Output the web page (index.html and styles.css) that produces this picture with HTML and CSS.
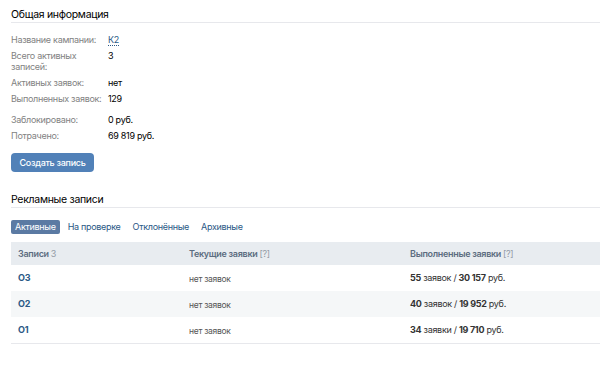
FILE: index.html
```html
<!DOCTYPE html>
<html lang="ru">
<head>
<meta charset="utf-8">
<link rel="stylesheet" href="styles.css">
</head>
<body>
<div class="page">
  <h2 class="heading">Общая информация</h2>
  <div class="info">
    <div class="row"><div class="label">Название кампании:</div><div class="value"><a class="dotted">К2</a></div></div>
    <div class="row"><div class="label">Всего активных записей:</div><div class="value">3</div></div>
    <div class="row"><div class="label">Активных заявок:</div><div class="value">нет</div></div>
    <div class="row"><div class="label">Выполненных заявок:</div><div class="value">129</div></div>
    <div class="row group"><div class="label">Заблокировано:</div><div class="value">0 руб.</div></div>
    <div class="row"><div class="label">Потрачено:</div><div class="value">69 819 руб.</div></div>
  </div>
  <button class="btn">Создать запись</button>
  <h2 class="heading heading2">Рекламные записи</h2>
  <div class="tabs">
    <span class="tab active">Активные</span>
    <span class="tab">На проверке</span>
    <span class="tab">Отклонённые</span>
    <span class="tab">Архивные</span>
  </div>
  <div class="table">
    <div class="tr th">
      <div class="c1">Записи <span class="cnt">3</span></div>
      <div class="c2">Текущие заявки <span class="q">[?]</span></div>
      <div class="c3">Выполненные заявки <span class="q">[?]</span></div>
    </div>
    <div class="tr">
      <div class="c1 name">О3</div>
      <div class="c2 none">нет заявок</div>
      <div class="c3 done"><b>55</b> заявок / <b>30 157</b> руб.</div>
    </div>
    <div class="tr alt">
      <div class="c1 name">О2</div>
      <div class="c2 none">нет заявок</div>
      <div class="c3 done"><b>40</b> заявок / <b>19 952</b> руб.</div>
    </div>
    <div class="tr">
      <div class="c1 name">О1</div>
      <div class="c2 none">нет заявок</div>
      <div class="c3 done"><b>34</b> заявки / <b>19 710</b> руб.</div>
    </div>
  </div>
</div>
</body>
</html>
```

FILE: styles.css
```css
html, body {
  margin: 0;
  padding: 0;
  background: #fff;
}
body {
  font-family: Inter, "Noto Sans", sans-serif;
  font-size: 9px;
  letter-spacing: -0.3px;
  color: #000;
}
.page {
  padding: 7px 0 0 11px;
}
.heading {
  margin: 0;
  font-size: 10.5px;
  font-weight: 400;
  letter-spacing: -0.3px;
  line-height: 15px;
  color: #000;
  border-bottom: 1px solid #e7e8ec;
}
.info {
  padding-top: 11px;
}
.row {
  display: flex;
  line-height: 11px;
  margin-bottom: 5px;
}
.row.group {
  margin-top: 10px;
}
.label {
  width: 97px;
  color: #828282;
  flex: none;
}
.value {
  color: #000;
}
.dotted {
  color: #2a5885;
  text-decoration: none;
  border-bottom: 1px dotted #2a5885;
}
.btn {
  display: block;
  margin-top: 12px;
  width: 83px;
  height: 19px;
  border: 0;
  border-radius: 4px;
  background: #5181b8;
  color: #fff;
  font-family: inherit;
  font-size: 9px;
  font-weight: 500;
  letter-spacing: -0.3px;
  padding: 0;
}
.heading2 {
  margin-top: 20px;
}
.tabs {
  display: flex;
  gap: 4px;
  margin-top: 12px;
  line-height: 14px;
}
.tab {
  padding: 0 4px;
  color: #2a5885;
  border-radius: 2px;
}
.tab.active {
  background: #5b7aa3;
  color: #fff;
}
.table {
  margin-top: 8px;
  border-bottom: 1px solid #e7e8ec;
}
.tr {
  display: flex;
  height: 26px;
  align-items: center;
  line-height: 12px;
}
.th {
  height: 23px;
  background: #e8ecf0;
  color: #5c6c80;
  font-weight: 600;
}
.alt {
  background: #f5f7f8;
}
.c1 {
  width: 171px;
  padding-left: 7px;
  flex: none;
}
.c2 {
  width: 221px;
  flex: none;
}
.c3 {
  flex: 1;
}
.cnt, .q {
  font-weight: 400;
  color: #939ba5;
}
.name {
  font-weight: 700;
  color: #2a5885;
}
.none {
  color: #555;
  font-size: 8.5px;
  line-height: 12px;
  padding-top: 2px;
}
.done {
  color: #333;
}
.done b {
  font-weight: 700;
}
```
